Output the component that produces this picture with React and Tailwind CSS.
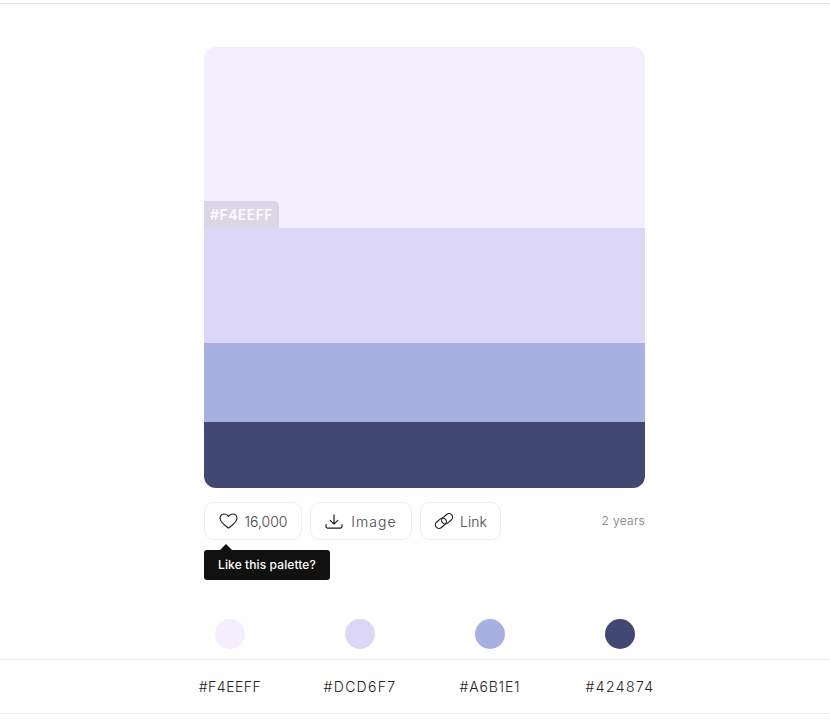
const F = { fontFamily: '"Inter", "Open Sans", sans-serif' };

function Heart() {
  return (
    <svg width="19" height="16" viewBox="0 0 20 17" fill="none" stroke="#1f1f1f" strokeWidth="1.2" strokeLinejoin="round">
      <path d="M10 16 C7.5 14 1 10.2 1 5.6 C1 2.9 3 1 5.5 1 C7.4 1 9 2 10 3.6 C11 2 12.6 1 14.5 1 C17 1 19 2.9 19 5.6 C19 10.2 12.5 14 10 16 Z" />
    </svg>
  );
}
function Download() {
  return (
    <svg width="18" height="15" viewBox="0 0 18 15" fill="none" stroke="#1f1f1f" strokeWidth="1.2" strokeLinecap="round" strokeLinejoin="round">
      <path d="M9 0.8 V10 M5.2 6.4 L9 10.2 L12.8 6.4" />
      <path d="M1 10.5 V12.6 C1 13.5 1.6 14.1 2.5 14.1 H15.5 C16.4 14.1 17 13.5 17 12.6 V10.5" />
    </svg>
  );
}
function LinkIcon() {
  return (
    <svg width="20" height="16" viewBox="0 0 20 16" fill="none" stroke="#1f1f1f" strokeWidth="1.15">
      <rect x="-6" y="-3.6" width="12" height="7.2" rx="3.6" transform="translate(6.9 10.2) rotate(-40)" />
      <rect x="-6" y="-3.6" width="12" height="7.2" rx="3.6" transform="translate(13.1 5.8) rotate(-40)" />
    </svg>
  );
}

function Btn({ icon, label, width, gap, text = "" }) {
  return (
    <button className={`flex h-[38px] items-center justify-center rounded-[10px] border border-[#eeeeee] bg-white text-[14px] font-light text-[#444444] ${width} ${gap}`}>
      {icon}
      <span className={text}>{label}</span>
    </button>
  );
}

const colors = [
  ["#F4EEFF", "bg-[#f4eeff]", "tracking-[0.5px]"],
  ["#DCD6F7", "bg-[#dcd6f7]", "tracking-[1.3px]"],
  ["#A6B1E1", "bg-[#a6b1e1]", "tracking-[0.8px]"],
  ["#424874", "bg-[#424874]", "tracking-[1.4px]"],
];

export default function App() {
  return (
    <div className="flex h-[724px] w-[830px] flex-col overflow-hidden bg-[#fefefe]" style={F}>
      <div className="h-[4px] border-b border-[#e8e8e8]" />
      <main className="ml-[204px] mt-[43px] w-[441px]">
        <div className="flex h-[441px] flex-col overflow-hidden rounded-[12px]">
          <div className="relative h-[181px] bg-[#f4eeff]">
            <span className="absolute bottom-0 left-0 flex h-[27px] w-[75px] items-center justify-center rounded-tr-[5px] bg-black/10 text-[14px] font-semibold tracking-[0.4px] text-white/90">
              #F4EEFF
            </span>
          </div>
          <div className="h-[115px] bg-[#dcd6f7]" />
          <div className="h-[79px] bg-[#a6b1e1]" />
          <div className="h-[66px] bg-[#424874]" />
        </div>
        <div className="mt-[14px] flex items-center">
          <div className="relative flex gap-2">
            <Btn icon={<Heart />} label="16,000" width="w-[98px]" gap="gap-[7px]" />
            <Btn icon={<Download />} label="Image" width="w-[102px]" gap="gap-[8px]" text="tracking-[1.1px]" />
            <Btn icon={<LinkIcon />} label="Link" width="w-[81px]" gap="gap-[6px]" />
            <div className="absolute left-0 top-[48px] flex h-[30px] w-[126px] items-center justify-center rounded-[3px] bg-[#111111] text-[12px] font-medium tracking-[0.1px] text-white">
              Like this palette?
              <span className="absolute left-[16px] top-[-6px] h-0 w-0 border-x-[6px] border-b-[6px] border-x-transparent border-b-[#111111]" />
            </div>
          </div>
          <span className="ml-auto text-[12px] font-light tracking-[0.3px] text-[#777777]">2 years</span>
        </div>
      </main>
      <div className="ml-[165px] mt-[79px] grid w-[520px] grid-cols-4">
        {colors.map(([name, bg]) => (
          <div key={name} className="flex justify-center">
            <div className={`h-[30px] w-[30px] rounded-full ${bg}`} />
          </div>
        ))}
      </div>
      <div className="mt-[10px] border-y border-[#eeeeee]">
        <div className="ml-[165px] grid h-[53px] w-[520px] grid-cols-4 items-center">
          {colors.map(([name, , track]) => (
            <span key={name} className={`text-center text-[14px] font-light text-[#222222] ${track}`}>
              {name}
            </span>
          ))}
        </div>
      </div>
    </div>
  );
}
